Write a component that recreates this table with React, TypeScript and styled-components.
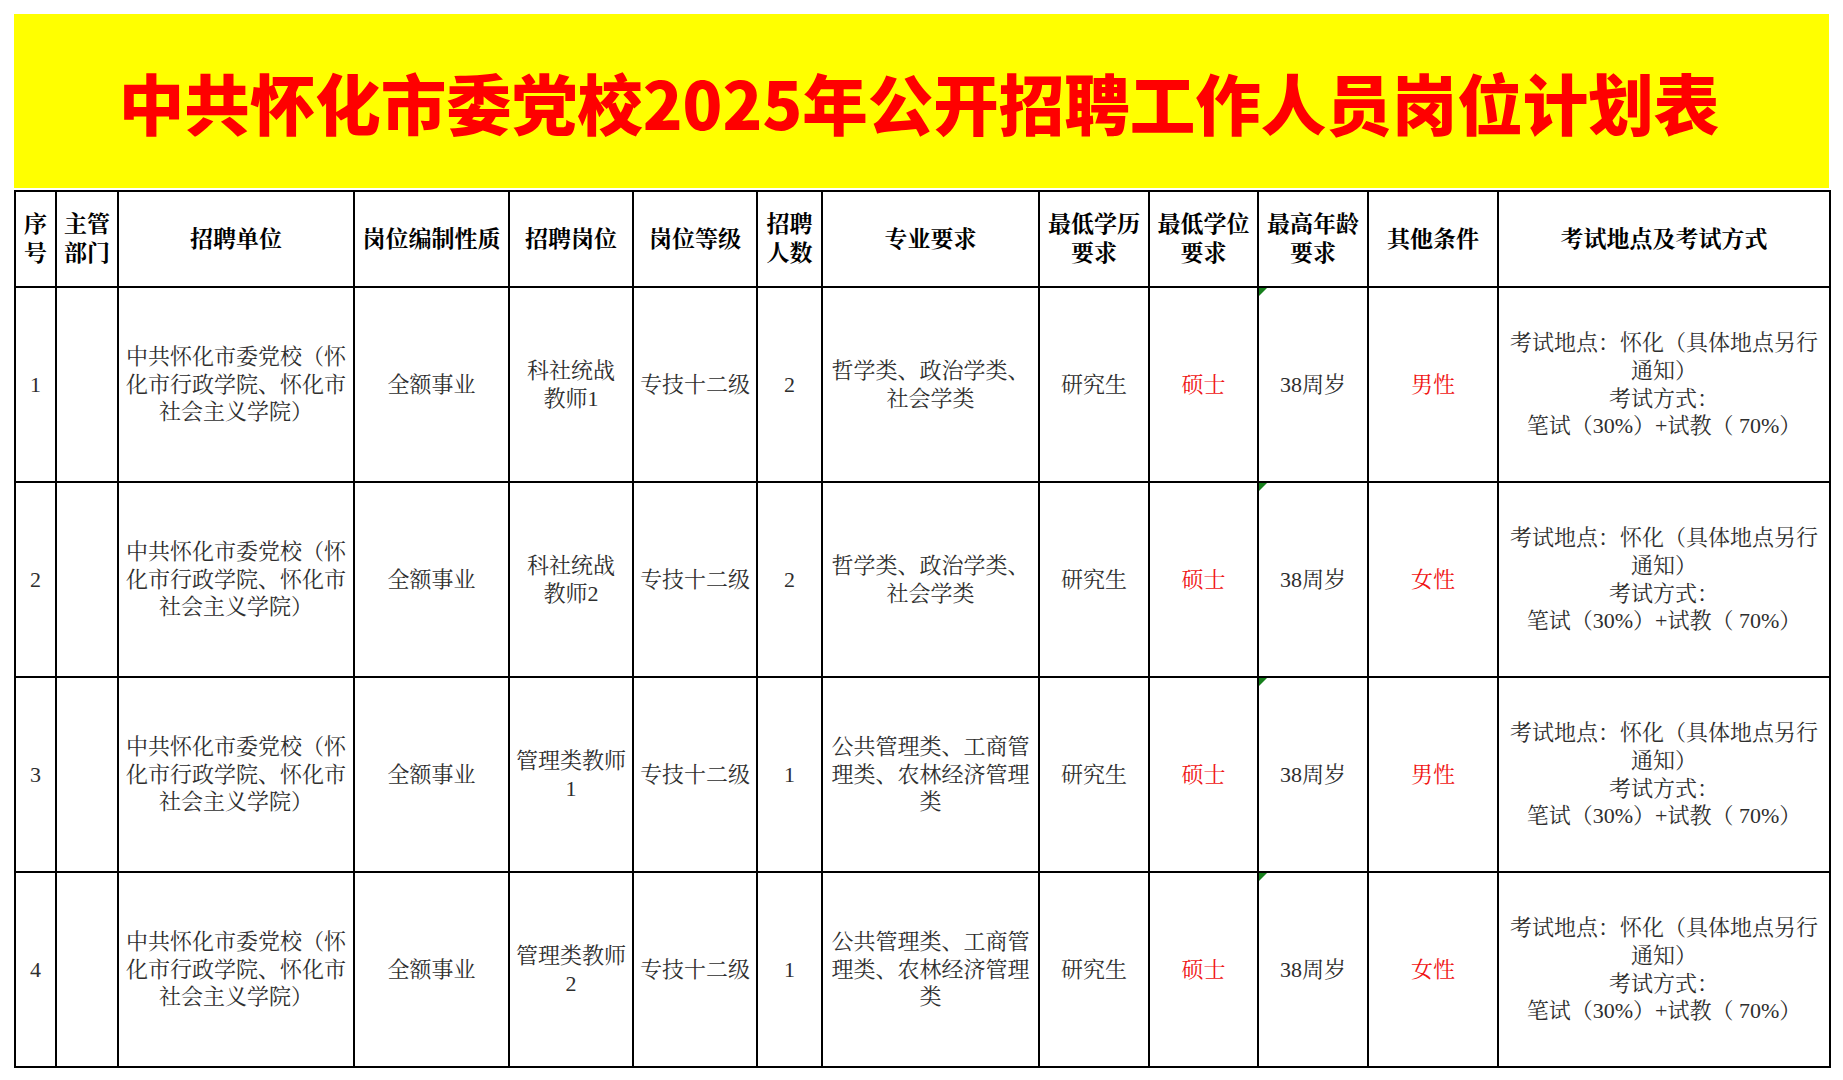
import styled, { createGlobalStyle } from 'styled-components';

const GlobalStyle = createGlobalStyle`
  html, body {
    margin: 0;
    padding: 0;
    background: #fff;
  }
`;

interface PlanRow {
  id: number;
  unit: string[];
  position: string[];
  count: number;
  major: string[];
  gender: string;
}

const columns = [41, 62, 236, 155, 124, 124, 65, 217, 110, 109, 110, 130, 332];

const headers: string[][] = [
  ['序', '号'],
  ['主管', '部门'],
  ['招聘单位'],
  ['岗位编制性质'],
  ['招聘岗位'],
  ['岗位等级'],
  ['招聘', '人数'],
  ['专业要求'],
  ['最低学历', '要求'],
  ['最低学位', '要求'],
  ['最高年龄', '要求'],
  ['其他条件'],
  ['考试地点及考试方式'],
];

const unitLines = ['中共怀化市委党校（怀', '化市行政学院、怀化市', '社会主义学院）'];
const examLines = ['考试地点：怀化（具体地点另行', '通知）', '考试方式：', '笔试（30%）+试教（ 70%）'];

const rows: PlanRow[] = [
  { id: 1, unit: unitLines, position: ['科社统战', '教师1'], count: 2, major: ['哲学类、政治学类、', '社会学类'], gender: '男性' },
  { id: 2, unit: unitLines, position: ['科社统战', '教师2'], count: 2, major: ['哲学类、政治学类、', '社会学类'], gender: '女性' },
  { id: 3, unit: unitLines, position: ['管理类教师', '1'], count: 1, major: ['公共管理类、工商管', '理类、农林经济管理', '类'], gender: '男性' },
  { id: 4, unit: unitLines, position: ['管理类教师', '2'], count: 1, major: ['公共管理类、工商管', '理类、农林经济管理', '类'], gender: '女性' },
];

const Lines = ({ lines }: { lines: string[] }) => (
  <>
    {lines.map((line, i) => (
      <Line key={i}>{line}</Line>
    ))}
  </>
);

export default function App() {
  return (
    <>
      <GlobalStyle />
      <Page>
        <TitleBanner>
          <Title>中共怀化市委党校2025年公开招聘工作人员岗位计划表</Title>
        </TitleBanner>
        <Table>
          <colgroup>
            {columns.map((w, i) => (
              <col key={i} style={{ width: w }} />
            ))}
          </colgroup>
          <thead>
            <HeadRow>
              {headers.map((h, i) => (
                <HeadCell key={i}>
                  <Lines lines={h} />
                </HeadCell>
              ))}
            </HeadRow>
          </thead>
          <tbody>
            {rows.map((row) => (
              <BodyRow key={row.id}>
                <Cell>{row.id}</Cell>
                <Cell />
                <Cell>
                  <Lines lines={row.unit} />
                </Cell>
                <Cell>全额事业</Cell>
                <Cell>
                  <Lines lines={row.position} />
                </Cell>
                <Cell>专技十二级</Cell>
                <Cell>{row.count}</Cell>
                <Cell>
                  <Lines lines={row.major} />
                </Cell>
                <Cell>研究生</Cell>
                <Cell $red>硕士</Cell>
                <Cell $flag>38周岁</Cell>
                <Cell $red>{row.gender}</Cell>
                <Cell>
                  <Lines lines={examLines} />
                </Cell>
              </BodyRow>
            ))}
          </tbody>
        </Table>
      </Page>
    </>
  );
}

const Page = styled.div`
  padding: 14px 14px 0 14px;
  width: 1815px;
  display: flex;
  flex-direction: column;
  gap: 2px;
`;

const TitleBanner = styled.div`
  height: 174px;
  background: #ffff00;
  display: flex;
  align-items: center;
  justify-content: center;
`;

const Title = styled.h1`
  margin: 2px 0 0 -5px;
  font-family: 'Noto Sans CJK SC', sans-serif;
  font-weight: 900;
  font-size: 65.5px;
  line-height: 1;
  color: #ff0000;
  letter-spacing: 0;
`;

const Table = styled.table`
  width: 1815px;
  table-layout: fixed;
  border-collapse: collapse;
  border: 2px solid #000;
  font-family: 'Liberation Serif', 'Noto Serif CJK SC', 'Noto Sans CJK SC', serif;
`;

const HeadRow = styled.tr`
  height: 96px;
`;

const BodyRow = styled.tr`
  height: 195px;
`;

const HeadCell = styled.th`
  border: 2px solid #000;
  padding: 0;
  font-size: 23px;
  line-height: 29px;
  font-weight: 700;
  color: #000;
  text-align: center;
  vertical-align: middle;
`;

const Cell = styled.td<{ $red?: boolean; $flag?: boolean }>`
  position: relative;
  border: 2px solid #000;
  padding: 0;
  font-size: 22px;
  line-height: 27.7px;
  color: ${({ $red }) => ($red ? '#f01414' : '#2e2e2e')};
  text-align: center;
  vertical-align: middle;

  &::before {
    content: '';
    display: ${({ $flag }) => ($flag ? 'block' : 'none')};
    position: absolute;
    top: 0;
    left: 0;
    width: 0;
    height: 0;
    border-top: 8px solid #17801d;
    border-right: 8px solid transparent;
  }
`;

const Line = styled.div`
  white-space: nowrap;
`;
